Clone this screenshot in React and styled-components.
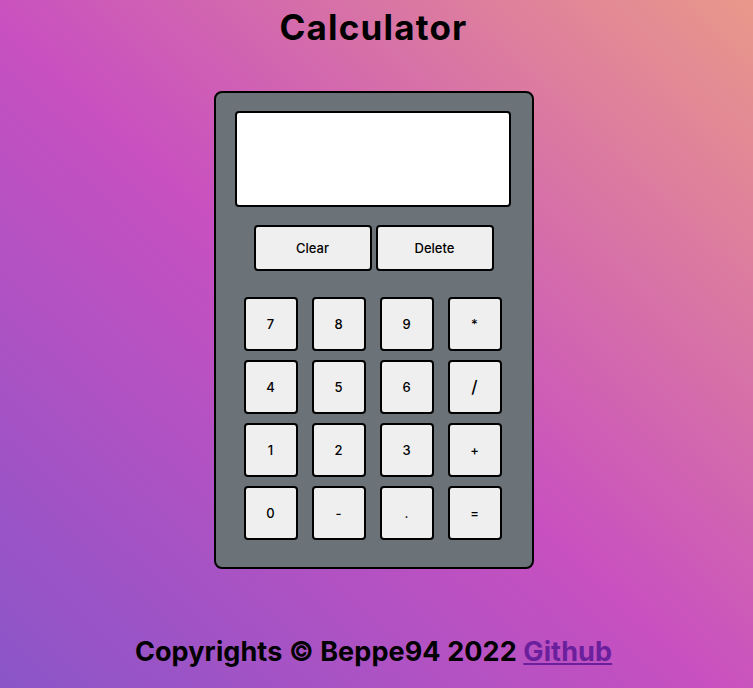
import React from 'react';
import styled, { createGlobalStyle } from 'styled-components';

const GlobalStyle = createGlobalStyle`
  * {
    box-sizing: border-box;
  }
  body {
    margin: 0;
    font-family: Inter, "Noto Sans", sans-serif;
  }
`;

const Page = styled.div`
  min-height: 100vh;
  display: flex;
  flex-direction: column;
  align-items: center;
  padding-right: 6px;
  background: linear-gradient(43deg, #8a55c8 0%, #c850c0 48%, #e9988a 100%);
`;

const Title = styled.h1`
  margin: 7px 0 0;
  font-size: 35px;
  font-weight: 700;
  line-height: 40px;
  letter-spacing: 1.2px;
  color: #000;
`;

const Calculator = styled.div`
  margin-top: 44px;
  width: 320px;
  height: 478px;
  background-color: #6b7278;
  border: 2px solid #000;
  border-radius: 8px;
  display: flex;
  flex-direction: column;
  align-items: center;
  padding: 18px 0 0;
`;

const Display = styled.div`
  width: 276px;
  height: 96px;
  margin-right: 2px;
  background-color: #fff;
  border: 2px solid #000;
  border-radius: 4px;
`;

const TopRow = styled.div`
  display: flex;
  gap: 4px;
  margin-top: 18px;
`;

const Key = styled.button`
  width: ${(p) => (p.$wide ? '118px' : '54px')};
  height: ${(p) => (p.$wide ? '46px' : '54px')};
  background-color: #efefef;
  border: 2px solid #000;
  border-radius: 4px;
  font-family: Inter, "Noto Sans", sans-serif;
  font-size: ${(p) => (p.$big ? '17px' : '13px')};
  font-weight: 500;
  color: #000;
  padding: 0;
  cursor: pointer;
`;

const Grid = styled.div`
  display: grid;
  grid-template-columns: repeat(4, 54px);
  column-gap: 14px;
  row-gap: 9px;
  margin-top: 26px;
  margin-right: 2px;
`;

const Footer = styled.footer`
  margin-top: auto;
  padding-bottom: 20px;
  font-size: 27px;
  font-weight: 700;
  line-height: 32px;
  letter-spacing: 0.1px;
  color: #000;
`;

const Link = styled.a`
  color: #6a1f9c;
  text-decoration: underline;
`;

const keys = ['7', '8', '9', '*', '4', '5', '6', '/', '1', '2', '3', '+', '0', '-', '.', '='];

const App = () => {
  return (
    <Page>
      <GlobalStyle />
      <Title>Calculator</Title>
      <Calculator>
        <Display />
        <TopRow>
          <Key $wide>Clear</Key>
          <Key $wide>Delete</Key>
        </TopRow>
        <Grid>
          {keys.map((k) => (
            <Key key={k} $big={k === '/'}>
              {k}
            </Key>
          ))}
        </Grid>
      </Calculator>
      <Footer>
        Copyrights © Beppe94 2022 <Link href="#">Github</Link>
      </Footer>
    </Page>
  );
};

export default App;
